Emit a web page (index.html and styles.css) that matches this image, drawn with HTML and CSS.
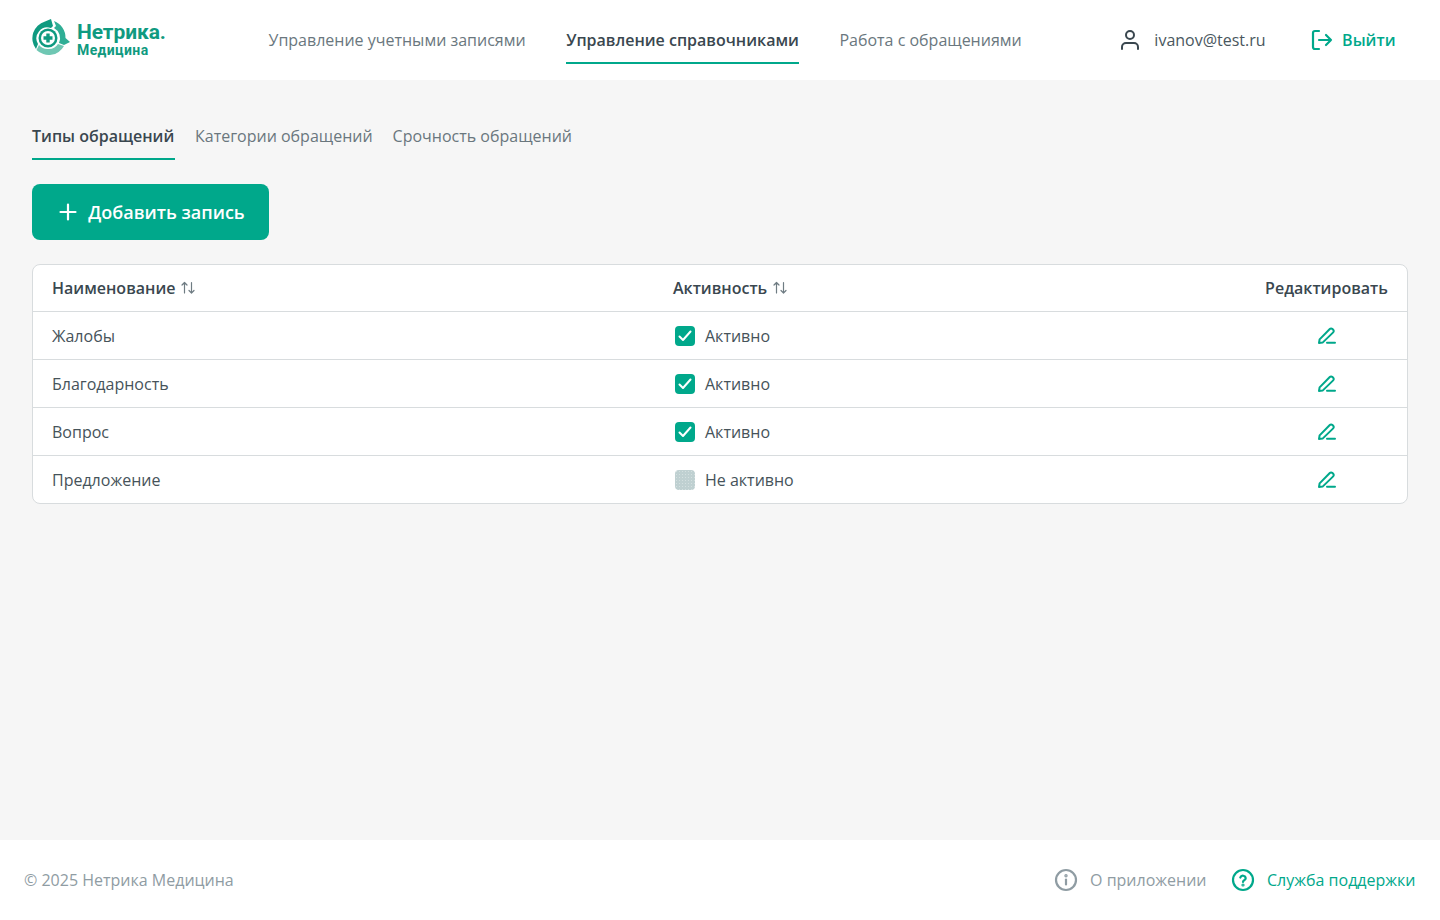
FILE: index.html
```html
<!DOCTYPE html>
<html lang="ru">
<head>
<meta charset="utf-8">
<title>Нетрика Медицина</title>
<link rel="stylesheet" href="styles.css">
</head>
<body>
<div class="page">
  <header class="header">
    <a class="logo">
      <svg class="logo-mark" width="40" height="44" viewBox="0 0 40 44">
        <path d="M4 33A17.500 17.500 0 0 1 13 5.500L19 3l2 7-2 2A11 11 0 0 0 6 28Z" fill="#0f9a80"/>
        <path d="M22 5A17.500 17.500 0 0 1 33.500 22L38 26l-6 3-5-2A11.500 11.500 0 0 0 22 12l2-2Z" fill="#2fae95"/>
        <path d="M4.500 34 7 29A11 11 0 0 0 17 33 11 11 0 0 0 26 28l6 2A17.500 17.500 0 0 1 4.500 34Z" fill="#6fc7b3"/>
        <circle cx="16" cy="22" r="9.500" fill="#0f9a80"/>
        <circle cx="16" cy="22" r="7" fill="#fff"/>
        <path d="M14.300 17.500h3.400v2.800h2.800v3.400h-2.800v2.800h-3.400v-2.800h-2.800v-3.400h2.800z" fill="#0f9a80"/>
      </svg>
      <span class="logo-text">
        <span class="logo-title">Нетрика.</span>
        <span class="logo-sub">Медицина</span>
      </span>
    </a>
    <nav class="nav">
      <a class="nav-item">Управление учетными записями</a>
      <a class="nav-item is-active">Управление справочниками</a>
      <a class="nav-item">Работа с обращениями</a>
    </nav>
    <div class="user">
      <svg width="24" height="24" viewBox="0 0 24 24" fill="none" stroke="#3a474f" stroke-width="2" stroke-linecap="round">
        <circle cx="12" cy="7" r="4"/>
        <path d="M4 21v-2a4 4 0 0 1 4-4h8a4 4 0 0 1 4 4v2"/>
      </svg>
      <span>ivanov@test.ru</span>
    </div>
    <a class="logout">
      <svg width="24" height="24" viewBox="0 0 24 24" fill="none" stroke="#00a88b" stroke-width="2.200" stroke-linecap="round" stroke-linejoin="round">
        <path d="M9 3H5a2 2 0 0 0-2 2v14a2 2 0 0 0 2 2h4"/>
        <path d="M9 12h12M16 7l5 5-5 5"/>
      </svg>
      <span>Выйти</span>
    </a>
  </header>

  <main class="main">
    <div class="tabs">
      <a class="tab is-active">Типы обращений</a>
      <a class="tab">Категории обращений</a>
      <a class="tab">Срочность обращений</a>
    </div>
    <button class="add-btn">
      <svg width="24" height="24" viewBox="0 0 24 24" fill="none" stroke="#fff" stroke-width="2.200" stroke-linecap="round">
        <path d="M12 4.500v15M4.500 12h15"/>
      </svg>
      <span>Добавить запись</span>
    </button>
    <div class="table">
      <div class="row row-head">
        <div class="cell-name">Наименование <svg class="sort" width="16" height="16" viewBox="0 0 16 16" fill="none" stroke="#6f7c83" stroke-width="1.200" stroke-linecap="round" stroke-linejoin="round"><path d="M4.500 13V2.500M2 5l2.500-2.500L7 5M11.500 2.500V13M9 10.500l2.500 2.500 2.500-2.500"/></svg></div>
        <div class="cell-active head-active">Активность <svg class="sort" width="16" height="16" viewBox="0 0 16 16" fill="none" stroke="#6f7c83" stroke-width="1.200" stroke-linecap="round" stroke-linejoin="round"><path d="M4.500 13V2.500M2 5l2.500-2.500L7 5M11.500 2.500V13M9 10.500l2.500 2.500 2.500-2.500"/></svg></div>
        <div class="cell-edit">Редактировать</div>
      </div>
      <div class="row">
        <div class="cell-name">Жалобы</div>
        <div class="cell-active"><span class="check is-on"><svg width="20" height="20" viewBox="0 0 20 20" fill="none" stroke="#fff" stroke-width="2" stroke-linecap="round" stroke-linejoin="round"><path d="M4.500 10.500 8 14 15.500 5.500"/></svg></span>Активно</div>
        <div class="cell-edit"><svg class="pen" width="24" height="24" viewBox="0 0 24 24" fill="none" stroke="#00a88b" stroke-width="2" stroke-linecap="round" stroke-linejoin="round"><path d="M4 19l.6-3.600L14.800 5a1.800 1.800 0 0 1 2.600 0l.8.800a1.800 1.800 0 0 1 0 2.600L7.600 18.600zM12 18.800h8"/></svg></div>
      </div>
      <div class="row">
        <div class="cell-name">Благодарность</div>
        <div class="cell-active"><span class="check is-on"><svg width="20" height="20" viewBox="0 0 20 20" fill="none" stroke="#fff" stroke-width="2" stroke-linecap="round" stroke-linejoin="round"><path d="M4.500 10.500 8 14 15.500 5.500"/></svg></span>Активно</div>
        <div class="cell-edit"><svg class="pen" width="24" height="24" viewBox="0 0 24 24" fill="none" stroke="#00a88b" stroke-width="2" stroke-linecap="round" stroke-linejoin="round"><path d="M4 19l.6-3.600L14.800 5a1.800 1.800 0 0 1 2.600 0l.8.800a1.800 1.800 0 0 1 0 2.600L7.600 18.600zM12 18.800h8"/></svg></div>
      </div>
      <div class="row">
        <div class="cell-name">Вопрос</div>
        <div class="cell-active"><span class="check is-on"><svg width="20" height="20" viewBox="0 0 20 20" fill="none" stroke="#fff" stroke-width="2" stroke-linecap="round" stroke-linejoin="round"><path d="M4.500 10.500 8 14 15.500 5.500"/></svg></span>Активно</div>
        <div class="cell-edit"><svg class="pen" width="24" height="24" viewBox="0 0 24 24" fill="none" stroke="#00a88b" stroke-width="2" stroke-linecap="round" stroke-linejoin="round"><path d="M4 19l.6-3.600L14.800 5a1.800 1.800 0 0 1 2.600 0l.8.800a1.800 1.800 0 0 1 0 2.600L7.600 18.600zM12 18.800h8"/></svg></div>
      </div>
      <div class="row">
        <div class="cell-name">Предложение</div>
        <div class="cell-active"><span class="check"></span>Не активно</div>
        <div class="cell-edit"><svg class="pen" width="24" height="24" viewBox="0 0 24 24" fill="none" stroke="#00a88b" stroke-width="2" stroke-linecap="round" stroke-linejoin="round"><path d="M4 19l.6-3.600L14.800 5a1.800 1.800 0 0 1 2.600 0l.8.800a1.800 1.800 0 0 1 0 2.600L7.600 18.600zM12 18.800h8"/></svg></div>
      </div>
    </div>
  </main>

  <footer class="footer">
    <span class="copy">© 2025 Нетрика Медицина</span>
    <div class="footer-links">
      <a class="foot-link">
        <svg width="24" height="24" viewBox="0 0 24 24" fill="none" stroke="#8f9ca3" stroke-width="2.200" stroke-linecap="round"><circle cx="12" cy="12" r="10"/><path d="M12 11.500v5"/><circle cx="12" cy="7.800" r=".6" fill="#8f9ca3"/></svg>
        <span>О приложении</span>
      </a>
      <a class="foot-link is-green">
        <svg width="24" height="24" viewBox="0 0 24 24" fill="none" stroke="#00a88b" stroke-width="2.200" stroke-linecap="round"><circle cx="12" cy="12" r="10"/><path d="M9.300 9.500a2.800 2.800 0 0 1 5.400.8c0 1.700-2.700 2-2.700 3.700"/><circle cx="12" cy="17" r=".5" fill="#00a88b"/></svg>
        <span>Служба поддержки</span>
      </a>
    </div>
  </footer>
</div>
</body>
</html>
```

FILE: styles.css
```css
* { box-sizing: border-box; }
html, body { margin: 0; height: 100%; }
body {
  font-family: "Open Sans", "Noto Sans", sans-serif;
  font-size: 16px;
  line-height: 24px;
  color: #46535a;
  background: #f6f6f6;
}
.page { min-height: 920px; display: flex; flex-direction: column; }

.header {
  height: 80px;
  background: #fff;
  display: flex;
  align-items: center;
  padding: 0 44.5px 0 32px;
}
.logo { display: flex; align-items: center; gap: 5px; width: 236.5px; flex: none; }
.logo-mark { display: block; flex: none; margin-top: -4px; }
.logo-text { display: flex; flex-direction: column; margin-top: -2px; color: #0f9a80; font-family: Roboto, sans-serif; }
.logo-title { font-size: 21px; line-height: 22px; font-weight: 700; letter-spacing: -.1px; }
.logo-sub { font-size: 14px; line-height: 15px; font-weight: 700; letter-spacing: .4px; }

.nav { display: flex; gap: 40.5px; height: 48px; }
.nav-item {
  color: #6a777e;
  height: 48px;
  line-height: 48px;
  border-bottom: 2px solid transparent;
}
.nav-item.is-active { color: #3a474f; font-weight: 600; border-bottom-color: #00a88b; }

.user { margin-left: auto; display: flex; align-items: center; gap: 12px; color: #4a575e; }
.logout { margin-left: 44.5px; display: flex; align-items: center; gap: 8px; color: #00a88b; font-weight: 600; }

.main { flex: 1; padding: 32px 32px 0; }
.tabs { display: flex; gap: 20px; height: 48px; }
.tab {
  color: #6a777e;
  height: 48px;
  line-height: 48px;
  border-bottom: 2px solid transparent;
}
.tab.is-active { color: #3a474f; font-weight: 600; border-bottom-color: #00a88b; min-width: 143px; }

.add-btn {
  margin-top: 24px;
  height: 56px;
  width: 237px;
  border: 0;
  border-radius: 8px;
  background: #00a88b;
  color: #fff;
  font: 600 18px/24px "Open Sans", "Noto Sans", sans-serif;
  display: flex;
  align-items: center;
  justify-content: center;
  gap: 8px;
  padding: 0;
}

.table {
  margin-top: 24px;
  background: #fff;
  border: 1px solid #d8dcde;
  border-radius: 8px;
  overflow: hidden;
}
.row {
  display: flex;
  align-items: center;
  height: 48px;
  padding: 0 19px;
  border-top: 1px solid #d8dcde;
}
.row-head { height: 46px; border-top: 0; font-weight: 600; color: #3a474f; }
.row-head .cell-name, .row-head .cell-active { display: flex; align-items: center; gap: 5px; }
.sort { display: block; }
.cell-name { width: 621px; flex: none; }
.cell-active { flex: 1; display: flex; align-items: center; gap: 10px; padding-left: 2px; }
.head-active { padding-left: 0; }
.cell-edit { width: 123px; flex: none; display: flex; justify-content: center; white-space: nowrap; }
.pen { display: block; }
.check {
  width: 20px;
  height: 20px;
  border-radius: 4px;
  background: #bfd0d1;
  background-image: radial-gradient(circle, #d4e0e0 0.6px, transparent 0.8px);
  background-size: 3px 3px;
  flex: none;
  display: block;
}
.check.is-on { background: #00a88b; }
.check svg { display: block; }

.footer {
  height: 80px;
  background: #fff;
  display: flex;
  align-items: center;
  justify-content: space-between;
  padding: 0 24.5px 0 24px;
}
.copy { color: #8f9ca3; }
.footer-links { display: flex; gap: 24.5px; }
.foot-link { display: flex; align-items: center; gap: 12px; color: #8f9ca3; }
.foot-link.is-green { color: #00a88b; }
```
